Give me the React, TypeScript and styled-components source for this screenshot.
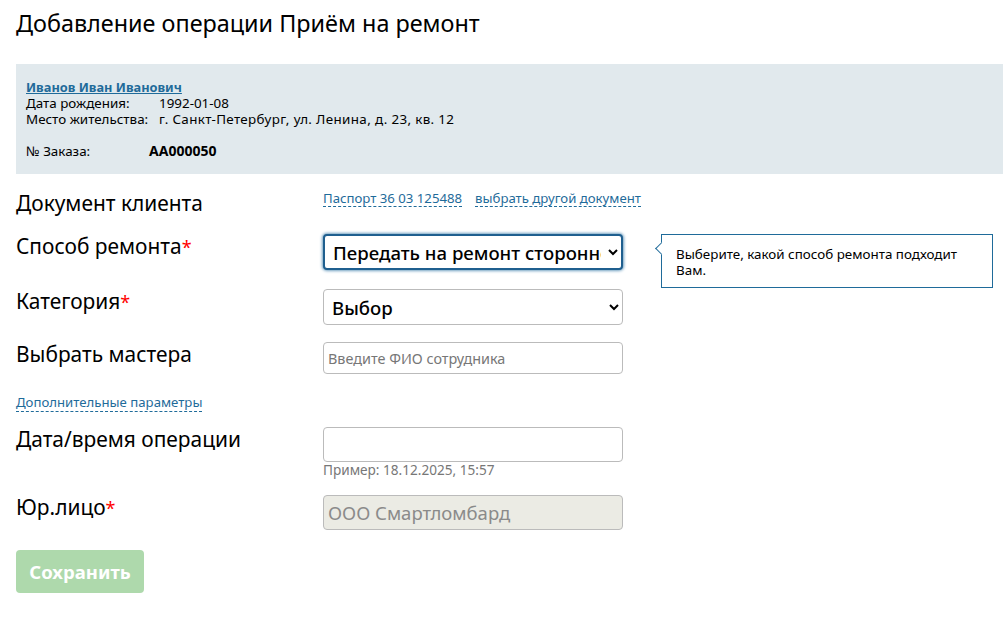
import styled, { createGlobalStyle } from "styled-components";

const GlobalStyle = createGlobalStyle`
  html, body {
    margin: 0;
    padding: 0;
    background: #fff;
    color: #000;
    font-family: "Noto Sans", Tahoma, sans-serif;
  }
`;

function App() {
  return (
    <Page>
      <GlobalStyle />
      <Title>Добавление операции Приём на ремонт</Title>

      <InfoBox>
        <ClientLink href="#">Иванов Иван Иванович</ClientLink>
        <InfoLine>
          <InfoLabel>Дата рождения:</InfoLabel>
          <span>1992-01-08</span>
        </InfoLine>
        <InfoLine>
          <InfoLabel>Место жительства:</InfoLabel>
          <Address>г. Санкт-Петербург, ул. Ленина, д. 23, кв. 12</Address>
        </InfoLine>
        <OrderLine>
          <OrderLabel>№ Заказа:</OrderLabel>
          <OrderNumber>АА000050</OrderNumber>
        </OrderLine>
      </InfoBox>

      <Row $height={60} $top={17}>
        <Label>Документ клиента</Label>
        <Links>
          <DashedLink>Паспорт 36 03 125488</DashedLink>
          <DashedLink>выбрать другой документ</DashedLink>
        </Links>
      </Row>

      <Row $height={55}>
        <Label>
          Способ ремонта<Required>*</Required>
        </Label>
        <FieldCell>
          <Select $focused defaultValue="external">
            <option value="external">Передать на ремонт стороннему мастеру</option>
          </Select>
          <Hint>Выберите, какой способ ремонта подходит Вам.</Hint>
        </FieldCell>
      </Row>

      <Row $height={53}>
        <Label>
          Категория<Required>*</Required>
        </Label>
        <Select defaultValue="none">
          <option value="none">Выбор</option>
        </Select>
      </Row>

      <Row $height={47}>
        <Label>Выбрать мастера</Label>
        <SmallInput placeholder="Введите ФИО сотрудника" />
      </Row>

      <MoreRow>
        <DashedLink>Дополнительные параметры</DashedLink>
      </MoreRow>

      <Row $height={68}>
        <Label>Дата/время операции</Label>
        <div>
          <DateInput />
          <Example>Пример: 18.12.2025, 15:57</Example>
        </div>
      </Row>

      <Row $height={55}>
        <Label>
          Юр.лицо<Required>*</Required>
        </Label>
        <DisabledInput disabled value="ООО Смартломбард" />
      </Row>

      <SaveButton disabled>Сохранить</SaveButton>
    </Page>
  );
}

export default App;

const Page = styled.div`
  padding: 0 0 25px 16px;
`;

const Title = styled.h1`
  margin: 0;
  height: 64px;
  padding-top: 7px;
  box-sizing: border-box;
  font-size: 23.4px;
  line-height: 32px;
  font-weight: 400;
`;

const InfoBox = styled.div`
  height: 110px;
  box-sizing: border-box;
  padding: 16px 10px 0;
  background: #e1e9ed;
  font-size: 13.4px;
`;

const ClientLink = styled.a`
  display: block;
  color: #1f6b9a;
  font-size: 12.8px;
  font-weight: 700;
  line-height: 15px;
`;

const InfoLine = styled.div`
  display: flex;
  line-height: 16px;
`;

const InfoLabel = styled.span`
  width: 133px;
  flex: none;
`;

const Address = styled.span`
  letter-spacing: 0.35px;
`;

const OrderLine = styled.div`
  display: flex;
  margin-top: 16px;
  line-height: 16px;
`;

const OrderLabel = styled.span`
  width: 123px;
  flex: none;
`;

const OrderNumber = styled.b`
  font-size: 14px;
`;

const Row = styled.div<{ $height: number; $top?: number }>`
  display: grid;
  grid-template-columns: 307px 1fr;
  height: ${(p) => p.$height}px;
  box-sizing: border-box;
  padding-top: ${(p) => p.$top ?? 0}px;
  align-items: start;
`;

const Label = styled.div`
  font-size: 20.9px;
  line-height: 24px;
`;

const Required = styled.span`
  color: #f00;
  font-size: 18px;
`;

const Links = styled.div`
  display: flex;
  column-gap: 13px;
  margin-top: -1px;
`;

const DashedLink = styled.span`
  color: #1f6b9a;
  font-size: 13.2px;
  line-height: 16px;
  border-bottom: 1px dashed #1f6b9a;
`;

const FieldCell = styled.div`
  position: relative;
`;

const Select = styled.select<{ $focused?: boolean }>`
  display: block;
  width: 300px;
  height: 36px;
  padding: 0 4px;
  box-sizing: border-box;
  background: #fff;
  color: #000;
  font-family: inherit;
  font-size: 18.6px;
  font-weight: 500;
  border-radius: 4px;
  border: ${(p) => (p.$focused ? "2px solid #1f5f8f" : "1px solid #bbb")};
  box-shadow: ${(p) => (p.$focused ? "0 0 3px 1px #6f9fc0" : "none")};
  outline: none;
`;

const Hint = styled.div`
  position: absolute;
  left: 338px;
  top: 0;
  width: 332px;
  height: 54px;
  box-sizing: border-box;
  padding: 11px 14px;
  background: #fff;
  border: 1px solid #1f6b9a;
  font-size: 13.4px;
  line-height: 16px;

  &::before {
    content: "";
    position: absolute;
    left: -5px;
    top: 9px;
    width: 8px;
    height: 8px;
    background: #fff;
    border-left: 1px solid #1f6b9a;
    border-bottom: 1px solid #1f6b9a;
    transform: rotate(45deg);
  }
`;

const BaseInput = styled.input`
  display: block;
  width: 300px;
  box-sizing: border-box;
  background: #fff;
  font-family: inherit;
  border: 1px solid #bbb;
  border-radius: 4px;
  outline: none;
`;

const SmallInput = styled(BaseInput)`
  height: 32px;
  padding: 0 4px;
  font-size: 14.4px;

  &::placeholder {
    color: #777;
  }
`;

const MoreRow = styled.div`
  height: 38px;
  padding-top: 1px;
  box-sizing: border-box;
`;

const DateInput = styled(BaseInput)`
  height: 35px;
`;

const Example = styled.div`
  color: #777;
  font-size: 13.6px;
  line-height: 16px;
`;

const DisabledInput = styled(BaseInput)`
  height: 35px;
  padding: 0 4px;
  background: #ebebe4;
  color: #8a8a8a;
  font-size: 18.5px;
`;

const SaveButton = styled.button`
  display: block;
  width: 128px;
  height: 43px;
  padding: 0;
  border: none;
  border-radius: 4px;
  background: #aed9ac;
  color: #fff;
  font-family: inherit;
  font-size: 18.5px;
  font-weight: 700;
`;
